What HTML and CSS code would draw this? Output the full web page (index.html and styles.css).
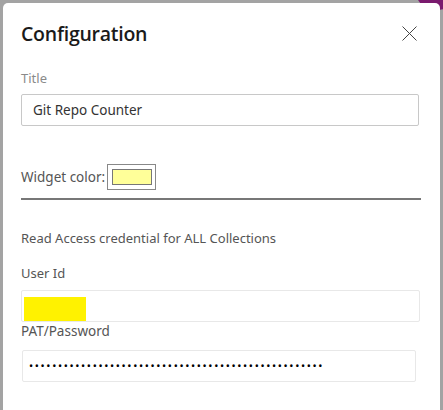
FILE: index.html
```html
<!DOCTYPE html>
<html>
<head>
<meta charset="utf-8">
<link rel="stylesheet" href="styles.css">
</head>
<body>
<div class="corner"></div>
<div class="dialog">
  <div class="header">
    <h1 class="title">Configuration</h1>
    <svg class="close" width="15" height="15" viewBox="0 0 15 15"><path d="M0.5 0.5 L14.5 14.5 M14.5 0.5 L0.5 14.5" stroke="#444" stroke-width="1" fill="none"/></svg>
  </div>
  <div class="label muted">Title</div>
  <div class="input title-input">Git Repo Counter</div>
  <div class="color-row">
    <span class="label-text">Widget color:</span>
    <span class="swatch"><span class="swatch-fill"></span></span>
  </div>
  <div class="rule"></div>
  <div class="section">Read Access credential for ALL Collections</div>
  <div class="label">User Id</div>
  <div class="input light user-input"><span class="redact"></span></div>
  <div class="label pat">PAT/Password</div>
  <div class="input light pass-input">•••••••••••••••••••••••••••••••••••••••••••••••••••</div>
</div>
</body>
</html>
```
FILE: styles.css
```css
html, body { margin: 0; padding: 0; }
body {
  background: #a3a3a3;
  font-family: "Noto Sans", "Open Sans", sans-serif;
  width: 443px;
  height: 410px;
  overflow: hidden;
  position: relative;
}
.corner {
  position: absolute;
  right: -14px;
  top: -20px;
  width: 40px;
  height: 30px;
  border-radius: 50%;
  background: #7a1a6e;
}
.dialog {
  position: relative;
  margin: 3px 0 0 3px;
  width: 437px;
  height: 420px;
  background: #fff;
  border-radius: 5px;
  box-sizing: border-box;
  padding: 0 22px 0 18px;
}
.header {
  display: flex;
  justify-content: space-between;
  align-items: center;
  height: 60px;
}
.title {
  margin: 0;
  font-family: "Open Sans", "Noto Sans", sans-serif;
  font-size: 19.5px;
  font-weight: 560;
  color: #1a1a1a;
  letter-spacing: -0.25px;
}
.close { margin-right: 1px; margin-top: 1px; }
.label {
  font-size: 13px;
  color: #555;
  height: 18px;
  line-height: 18px;
}
.label.muted { color: #8a8a8a; margin-top: 6px; }
.input {
  box-sizing: border-box;
  border: 1px solid #c8c8c8;
  border-radius: 2px;
  height: 32px;
  line-height: 30px;
  font-size: 13.5px;
  color: #333;
  padding: 0 11px;
}
.title-input { margin-top: 7px; width: 398px; }
.color-row {
  display: flex;
  align-items: center;
  margin-top: 38px;
  font-size: 13.5px;
  color: #555;
}
.swatch {
  margin-left: 2px;
  width: 49px;
  height: 26px;
  box-sizing: border-box;
  border: 1px solid #888;
  display: flex;
  align-items: center;
  justify-content: center;
}
.swatch-fill {
  width: 40px;
  height: 16px;
  box-sizing: border-box;
  border: 1px solid #777;
  background: #ffff99;
}
.rule {
  margin-top: 8px;
  height: 2px;
  background: #777;
  width: 400px;
}
.section {
  margin-top: 29px;
  font-size: 13px;
  color: #555;
}
.section + .label { margin-top: 17px; }
.input.light { border-color: #e8e8e8; }
.user-input {
  margin-top: 8px;
  width: 399px;
  height: 32px;
  padding: 0 0 0 2px;
  display: flex;
  align-items: flex-end;
}
.redact {
  width: 62px;
  height: 24px;
  background: #fff200;
}
.label.pat { margin-top: 0; font-size: 13.5px; }
.pass-input {
  margin-top: 10px;
  margin-left: 1px;
  width: 394px;
  font-size: 11px;
  letter-spacing: 1.65px;
  color: #000;
  padding-left: 6px;
  white-space: nowrap;
  overflow: hidden;
}
```
